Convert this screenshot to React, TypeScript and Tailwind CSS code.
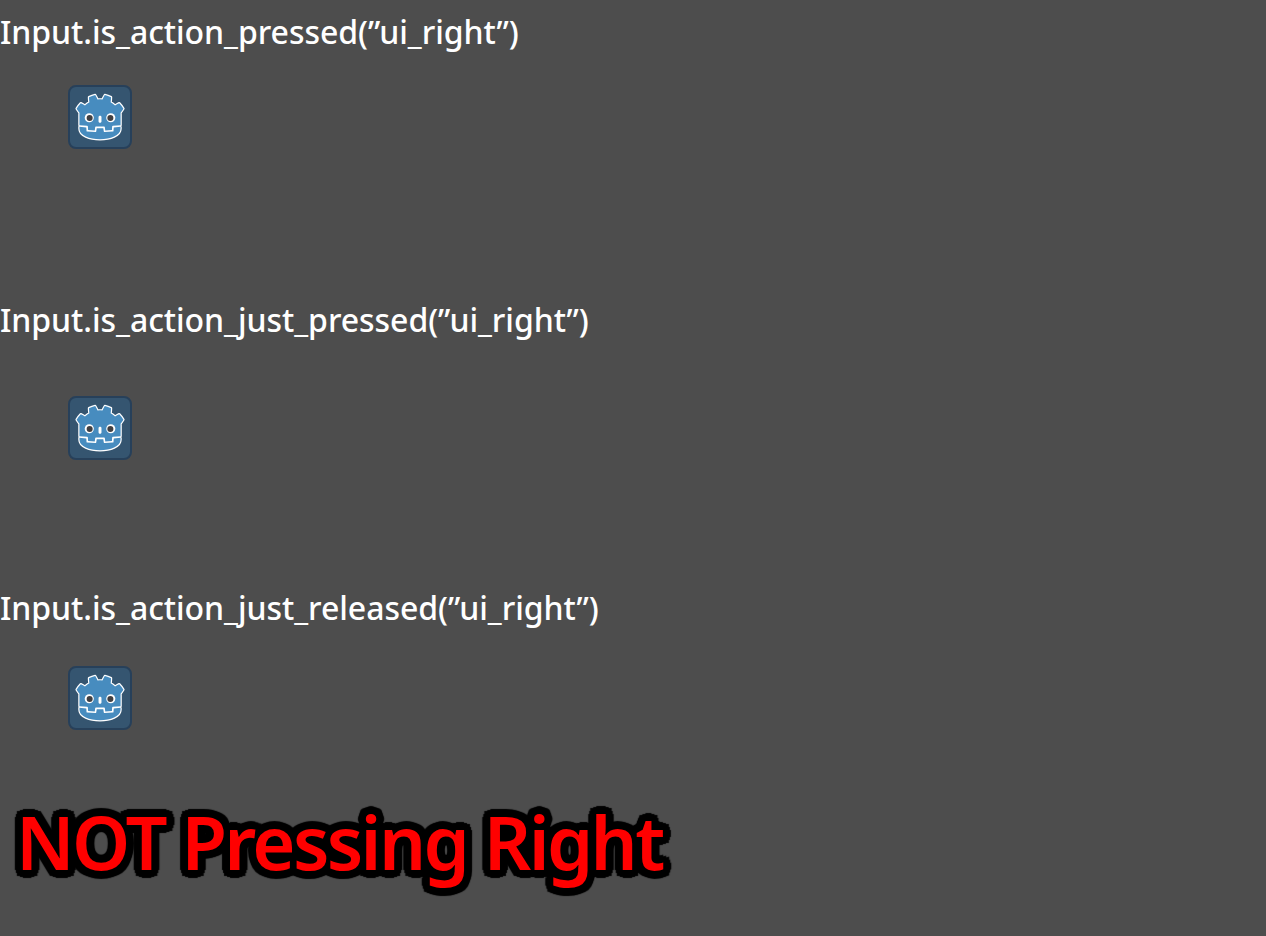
const GodotIcon = ({ className = "" }: { className?: string }) => {
  const body =
    "m105 673 152 14q12 1 15 14l4 67 132 10 8-61q2-11 15-15h162q13 4 15 15l8 61 132-10 4-67q3-13 15-14l152-14V427q30-39 56-81-35-59-83-108-43 20-82 47-40-37-88-64 7-51 8-102-59-28-123-42-26 43-46 89-49-7-98 0-20-46-46-89-64 14-123 42 1 51 8 102-48 27-88 64-39-27-82-47-48 49-83 108 26 42 56 81zm0 33v39c0 276 813 276 813 0v-39l-134 12-5 69q-2 10-14 13l-162 11q-12 0-16-11l-10-65H447l-10 65q-4 11-16 11l-162-11q-12-3-14-13l-5-69z";
  return (
    <svg viewBox="0 0 128 128" className={`w-16 h-16 block ${className}`}>
      <rect x="2" y="2" width="124" height="124" rx="14" fill="#355570" stroke="#27405a" strokeWidth="4" />
      <g transform="scale(.101) translate(122 122)">
        {/* white outline sits under the fill so only the outer edge and jaw gap show */}
        <path fill="#fff" stroke="#fff" strokeWidth="48" strokeLinejoin="round" d={body} />
        <path fill="#478cbf" d={body} />
        <path fill="#fff" d="M483 600c3 34 55 34 58 0v-86c-3-34-55-34-58 0z" />
        <circle cx="725" cy="526" r="90" fill="#fff" />
        <circle cx="299" cy="526" r="90" fill="#fff" />
        <circle cx="307" cy="532" r="60" fill="#414042" />
        <circle cx="717" cy="532" r="60" fill="#414042" />
      </g>
    </svg>
  );
};

const Label = ({ children }: { children: string }) => (
  <div className="h-10 leading-10 text-[32px] font-medium text-white whitespace-nowrap tracking-[-0.05px]">{children}</div>
);

export default function App() {
  return (
    <div className="w-[1266px] h-[936px] overflow-hidden bg-[#4d4d4d] font-['Noto_Sans',sans-serif]">
      <div className="pt-3">
        <Label>Input.is_action_pressed(”ui_right”)</Label>
        <GodotIcon className="ml-[68px] mt-[33px]" />
      </div>
      <div className="pt-[151px]">
        <Label>Input.is_action_just_pressed(”ui_right”)</Label>
        <GodotIcon className="ml-[68px] mt-[56px]" />
      </div>
      <div className="pt-[128px]">
        <Label>Input.is_action_just_released(”ui_right”)</Label>
        <GodotIcon className="ml-[68px] mt-[38px]" />
      </div>
      <div className="mt-[64px] ml-[16px] text-[74px] leading-[96px] font-semibold tracking-[-2.65px] text-[#ff0000] whitespace-nowrap [text-shadow:8px_0_1px_#000,-8px_0_1px_#000,0_8px_1px_#000,0_-8px_1px_#000,6px_6px_1px_#000,-6px_6px_1px_#000,6px_-6px_1px_#000,-6px_-6px_1px_#000,7px_3px_1px_#000,-7px_3px_1px_#000,7px_-3px_1px_#000,-7px_-3px_1px_#000,3px_7px_1px_#000,-3px_7px_1px_#000,3px_-7px_1px_#000,-3px_-7px_1px_#000,4px_0_#000,-4px_0_#000,0_4px_#000,0_-4px_#000,3px_3px_#000,-3px_3px_#000,3px_-3px_#000,-3px_-3px_#000]">
        NOT Pressing Right
      </div>
    </div>
  );
}
